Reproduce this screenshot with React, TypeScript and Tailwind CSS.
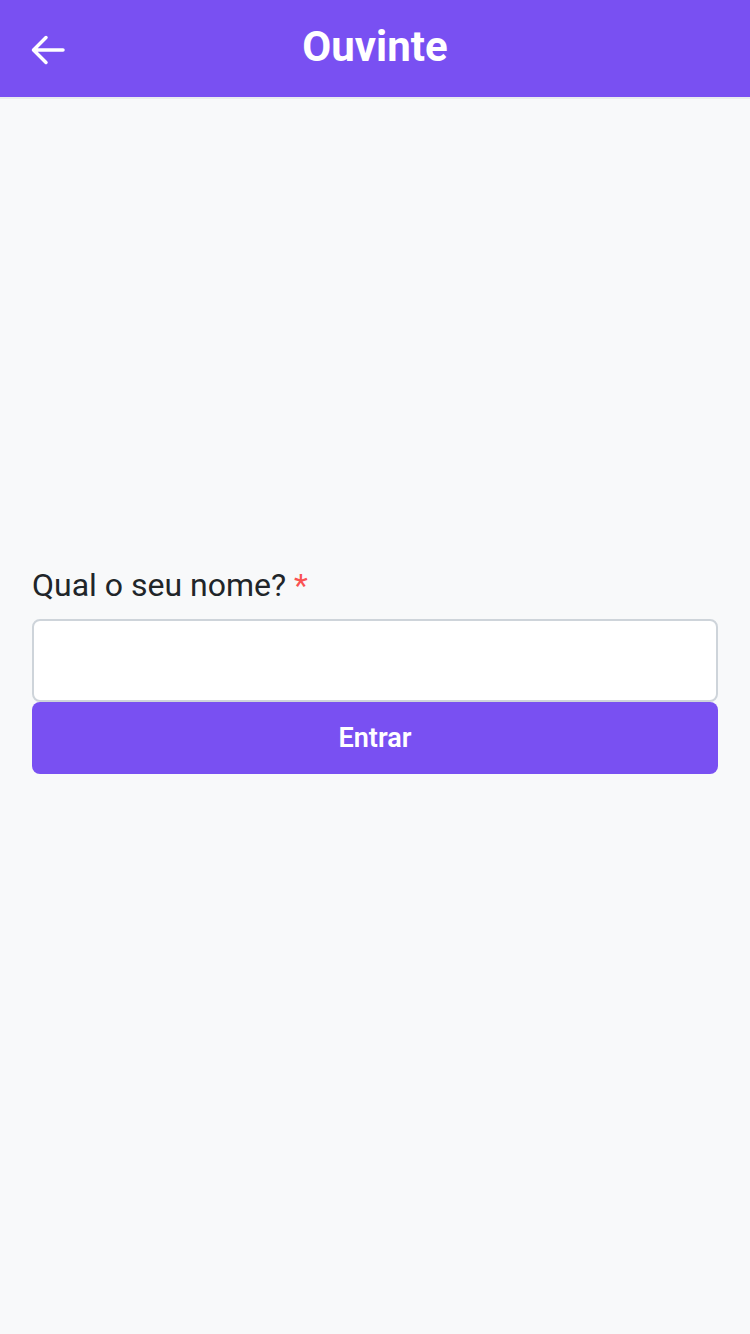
import React from 'react';

function BackArrow() {
  return (
    <svg width="36" height="32" viewBox="0 0 36 32" fill="none" className="block">
      <path
        d="M33 16H4M16 3.5 3.5 16 16 28.5"
        stroke="white"
        strokeWidth="3.5"
        strokeLinecap="round"
        strokeLinejoin="round"
      />
    </svg>
  );
}

export default function App() {
  return (
    <div className="min-h-[1334px] bg-[#f8f9fa] font-['Roboto',sans-serif]">
      <header className="relative h-[99px] bg-[#7950f2] border-b-2 border-[#e9ecef] flex items-center justify-center">
        <button className="absolute left-[30px] top-[34px]">
          <BackArrow />
        </button>
        <h1 className="text-white text-[42px] font-bold leading-none -mt-1">Ouvinte</h1>
      </header>

      <main className="px-8 pt-[461px]">
        <label className="block text-[32px] leading-[50px] text-[#212529] mb-[9px]">
          Qual o seu nome? <span className="text-[#fa5252]">*</span>
        </label>
        <input
          type="text"
          className="block w-full h-[83px] bg-white border-2 border-[#ced4da] rounded-[8px] px-4 text-[30px] outline-none"
        />
        <button className="w-full h-[72px] bg-[#7950f2] rounded-[8px] text-white text-[27px] font-semibold">
          Entrar
        </button>
      </main>
    </div>
  );
}
